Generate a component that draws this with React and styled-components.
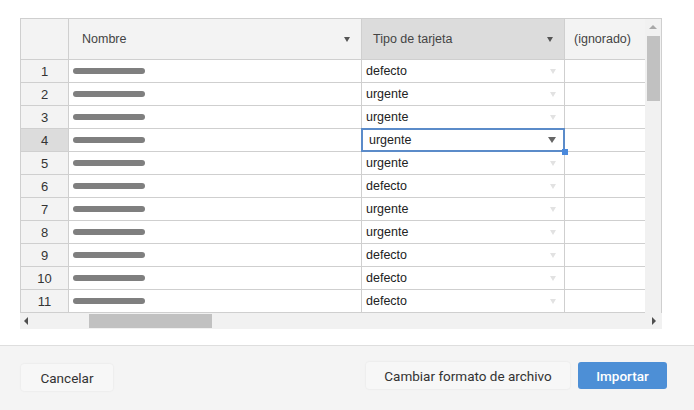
import React from 'react'
import styled, { createGlobalStyle } from 'styled-components'

const GlobalStyle = createGlobalStyle`
  html, body {
    margin: 0;
    padding: 0;
    background: #fff;
  }
  * { box-sizing: border-box; }
`

const Page = styled.div`
  width: 694px;
  height: 410px;
  display: flex;
  flex-direction: column;
  font-family: "Liberation Sans", Arial, sans-serif;
`

const Main = styled.div`
  flex: 1;
  padding: 18px 0 0 20px;
`

const Frame = styled.div`
  width: 642px;
  border: 1px solid #cfcfcf;
  border-bottom: none;
  display: flex;
  flex-direction: column;
`

const TopArea = styled.div`
  display: flex;
`

const Grid = styled.div`
  display: grid;
  grid-template-columns: 48px 293px 203px 80px;
  grid-auto-rows: 23px;
  grid-template-rows: 41px;
`

const HeadCell = styled.div`
  position: relative;
  display: flex;
  align-items: center;
  justify-content: space-between;
  padding: 0 11px 0 ${p => p.$pad || 13}px;
  background: ${p => (p.$active ? '#dcdcdc' : '#f3f3f3')};
  border-right: ${p => (p.$last ? 'none' : '1px solid #cfcfcf')};
  border-bottom: 1px solid #cfcfcf;
  color: #444;
  font-size: 12.5px;
  white-space: nowrap;
  overflow: hidden;
`

const RowNum = styled.div`
  display: flex;
  align-items: center;
  justify-content: center;
  background: ${p => (p.$active ? '#dcdcdc' : '#f3f3f3')};
  border-right: 1px solid #cfcfcf;
  border-bottom: 1px solid #cfcfcf;
  color: #333;
  font-size: 13px;
`

const Cell = styled.div`
  position: relative;
  display: flex;
  align-items: center;
  justify-content: space-between;
  padding: 0 8px 0 4px;
  background: #fff;
  border-right: ${p => (p.$last ? 'none' : '1px solid #cfcfcf')};
  border-bottom: 1px solid #cfcfcf;
  color: #222;
  font-size: 12.5px;
  z-index: ${p => (p.$selected ? 2 : 'auto')};
`

const SelectedBox = styled.div`
  position: absolute;
  left: -1px;
  top: -1px;
  right: -1px;
  bottom: -1px;
  border: 2px solid #5b8bc9;
  pointer-events: none;
`

const Handle = styled.div`
  position: absolute;
  right: -5px;
  bottom: -5px;
  width: 6px;
  height: 6px;
  background: #4a89dc;
`

const NameBar = styled.div`
  width: 72px;
  height: 6px;
  border-radius: 3px;
  background: #7f7f7f;
`

const Arrow = styled.span`
  width: 0;
  height: 0;
  border-left: ${p => p.$size || 3.5}px solid transparent;
  border-right: ${p => p.$size || 3.5}px solid transparent;
  border-top: ${p => (p.$size ? p.$size * 1.5 : 6)}px solid ${p => p.$color || '#ddd'};
`

const Value = styled.span`
  padding-left: ${p => (p.$shift ? 3 : 0)}px;
`

const VScroll = styled.div`
  width: 16px;
  background: #f1f1f1;
  display: flex;
  flex-direction: column;
  align-items: center;
  padding-top: 6px;
`

const UpArrow = styled.span`
  width: 0;
  height: 0;
  border-left: 4px solid transparent;
  border-right: 4px solid transparent;
  border-bottom: 4px solid #a8a8a8;
`

const VThumb = styled.div`
  margin-top: 7px;
  width: 13px;
  height: 65px;
  background: #c1c1c1;
`

const HScroll = styled.div`
  height: 16px;
  background: #f1f1f1;
  display: flex;
  align-items: center;
  margin: 0 0 0 -1px;
  width: 642px;
  padding: 0 6px 0 4px;
`

const SideArrow = styled.span`
  width: 0;
  height: 0;
  border-top: 4px solid transparent;
  border-bottom: 4px solid transparent;
  ${p => (p.$dir === 'left' ? 'border-right: 4px solid #505050;' : 'border-left: 4px solid #505050;')}
`

const HThumb = styled.div`
  margin-left: 61px;
  width: 123px;
  height: 14px;
  background: #c1c1c1;
  flex: none;
`

const Spacer = styled.div`
  flex: 1;
`

const Footer = styled.div`
  height: 65px;
  border-top: 1px solid #dedede;
  background: #f4f4f4;
  display: flex;
  align-items: flex-start;
  padding: 16px 27px 0 21px;
  gap: 8px;
`

const Button = styled.button`
  height: 27px;
  width: ${p => p.$w}px;
  margin-top: ${p => p.$top || 0}px;
  border: none;
  border-radius: 3px;
  background: ${p => (p.$primary ? '#4d8fd6' : '#f7f7f7')};
  color: ${p => (p.$primary ? '#fff' : '#333')};
  box-shadow: ${p => (p.$primary ? 'none' : '0 0 2px rgba(0,0,0,0.09)')};
  font-family: Roboto, "Liberation Sans", sans-serif;
  font-size: 13.5px;
  font-weight: ${p => (p.$primary ? 500 : 400)};
  padding: 0;
`

const types = ['defecto', 'urgente', 'urgente', 'urgente', 'urgente', 'defecto', 'urgente', 'urgente', 'defecto', 'defecto', 'defecto']

export default function App() {
  return (
    <Page>
      <GlobalStyle />
      <Main>
        <Frame>
          <TopArea>
            <Grid>
              <HeadCell />
              <HeadCell $pad={13}>
                Nombre <Arrow $color="#555" $size={3.5} />
              </HeadCell>
              <HeadCell $active $pad={11}>
                Tipo de tarjeta <Arrow $color="#555" $size={3.5} />
              </HeadCell>
              <HeadCell $last $pad={9}>
                (ignorado)
              </HeadCell>
              {types.map((t, i) => {
                const sel = i === 3
                return (
                  <React.Fragment key={i}>
                    <RowNum $active={sel}>{i + 1}</RowNum>
                    <Cell>
                      <NameBar />
                    </Cell>
                    <Cell $selected={sel}>
                      <Value $shift={sel}>{t}</Value>
                      <Arrow $color={sel ? '#666' : '#e2e2e2'} $size={sel ? 4 : 3.5} />
                      {sel && (
                        <SelectedBox>
                          <Handle />
                        </SelectedBox>
                      )}
                    </Cell>
                    <Cell $last />
                  </React.Fragment>
                )
              })}
            </Grid>
            <VScroll>
              <UpArrow />
              <VThumb />
            </VScroll>
          </TopArea>
          <HScroll>
            <SideArrow $dir="left" />
            <HThumb />
            <Spacer />
            <SideArrow $dir="right" />
          </HScroll>
        </Frame>
      </Main>
      <Footer>
        <Button $w={92} $top={2}>Cancelar</Button>
        <Spacer />
        <Button $w={204}>Cambiar formato de archivo</Button>
        <Button $w={89} $primary>Importar</Button>
      </Footer>
    </Page>
  )
}
